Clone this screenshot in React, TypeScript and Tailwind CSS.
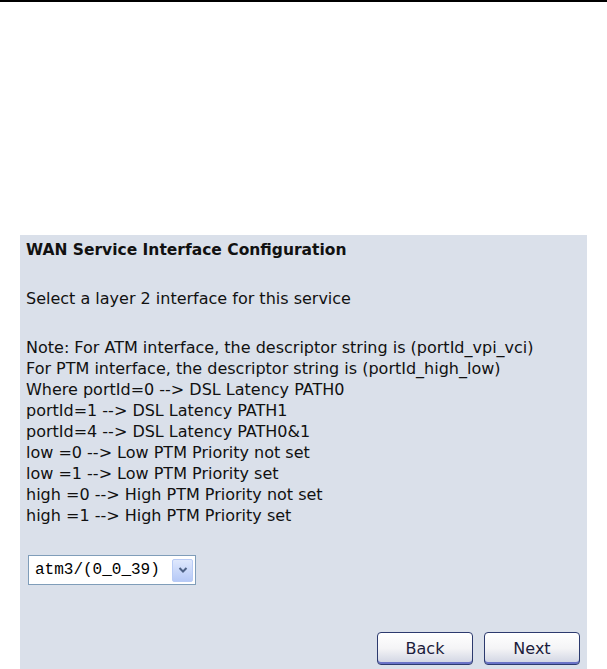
import React from "react";

const lines = [
  "Note: For ATM interface, the descriptor string is (portId_vpi_vci)",
  "For PTM interface, the descriptor string is (portId_high_low)",
  "Where portId=0 --> DSL Latency PATH0",
  "portId=1 --> DSL Latency PATH1",
  "portId=4 --> DSL Latency PATH0&1",
  "low =0 --> Low PTM Priority not set",
  "low =1 --> Low PTM Priority set",
  "high =0 --> High PTM Priority not set",
  "high =1 --> High PTM Priority set",
];

function XpButton({ label }: { label: string }) {
  return (
    <button
      type="button"
      className="h-[33px] w-[96px] rounded-[4px] border border-[#2c3a6e] bg-gradient-to-b from-white via-[#f4f4f6] to-[#cfd3e2] text-[16px] text-[#1c1c3c] shadow-[inset_0_-2px_0_#6a73c8]"
      style={{ fontFamily: '"DejaVu Sans", Verdana, sans-serif' }}
    >
      {label}
    </button>
  );
}

export default function App() {
  return (
    <div className="min-h-[669px] w-[607px] bg-white" style={{ fontFamily: '"DejaVu Sans", Verdana, sans-serif' }}>
      <div className="h-[2px] w-full bg-black" />
      <div className="ml-[20px] mt-[233px] h-[434px] w-[567px] bg-[#dae0ea] pl-[6px] pr-[7px] pt-[5px] text-[16px] leading-[21px] text-[#111]">
        <div className="text-[15.5px] font-bold">WAN Service Interface Configuration</div>
        <div className="mt-[27px]">Select a layer 2 interface for this service</div>
        <div className="mt-[28px]">
          {lines.map((l) => (
            <div key={l}>{l}</div>
          ))}
        </div>
        <div className="ml-[2px] mt-[29px] flex h-[30px] w-[168px] items-center border border-[#7f9db9] bg-white pl-[6px] pr-[2px]">
          <span
            className="flex-1 text-[16px] text-black"
            style={{ fontFamily: '"Liberation Mono", "Noto Sans CJK SC", monospace' }}
          >
            atm3/(0_0_39)
          </span>
          <span className="flex h-[23px] w-[21px] items-center justify-center rounded-[2px] border border-[#b8cbf5] bg-gradient-to-b from-[#dfe8fd] to-[#b6c9f6]">
            <svg width="10" height="8" viewBox="0 0 10 8">
              <path d="M1.5 2 L5 5.5 L8.5 2" fill="none" stroke="#4d6185" strokeWidth="2" />
            </svg>
          </span>
        </div>
        <div className="mt-[47px] flex justify-end gap-[11px]">
          <XpButton label="Back" />
          <XpButton label="Next" />
        </div>
      </div>
    </div>
  );
}
